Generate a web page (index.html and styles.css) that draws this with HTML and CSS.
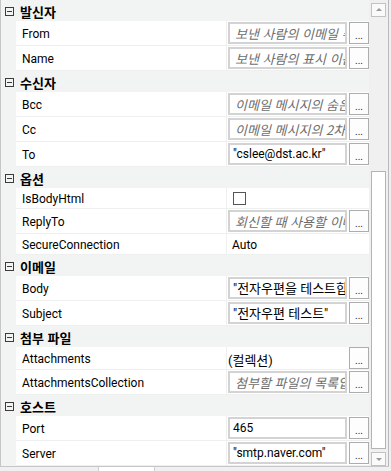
FILE: index.html
```html
<!DOCTYPE html>
<html lang="ko">
<head>
    <meta charset="UTF-8">
    <title>속성</title>
    <link rel="stylesheet" href="styles.css">
</head>
<body>

    <!-- 속성 그리드 -->
    <div class="panel">
        <div class="rows">
            <div class="cat"><span class="toggle"></span>발신자</div>
            <div class="prop">
                <div class="name">From</div>
                <div class="value"><span class="box ph">보낸 사람의 이메일 주소</span><span class="btn">...</span></div>
            </div>
            <div class="prop">
                <div class="name">Name</div>
                <div class="value"><span class="box ph">보낸 사람의 표시 이름</span><span class="btn">...</span></div>
            </div>

            <div class="cat"><span class="toggle"></span>수신자</div>
            <div class="prop">
                <div class="name">Bcc</div>
                <div class="value"><span class="box ph">이메일 메시지의 숨은 참조 수신자</span><span class="btn">...</span></div>
            </div>
            <div class="prop">
                <div class="name">Cc</div>
                <div class="value"><span class="box ph">이메일 메시지의 2차 수신자</span><span class="btn">...</span></div>
            </div>
            <div class="prop">
                <div class="name">To</div>
                <div class="value"><span class="box">"cslee@dst.ac.kr"</span><span class="btn">...</span></div>
            </div>

            <div class="cat"><span class="toggle"></span>옵션</div>
            <div class="prop short">
                <div class="name">IsBodyHtml</div>
                <div class="value"><span class="check"></span></div>
            </div>
            <div class="prop">
                <div class="name">ReplyTo</div>
                <div class="value"><span class="box ph">회신할 때 사용할 이메일 주소</span><span class="btn">...</span></div>
            </div>
            <div class="prop short">
                <div class="name">SecureConnection</div>
                <div class="value"><span class="plain">Auto</span></div>
            </div>

            <div class="cat"><span class="toggle"></span>이메일</div>
            <div class="prop">
                <div class="name">Body</div>
                <div class="value"><span class="box ko">"전자우편을 테스트합니다"</span><span class="btn">...</span></div>
            </div>
            <div class="prop">
                <div class="name">Subject</div>
                <div class="value"><span class="box ko">"전자우편 테스트"</span><span class="btn">...</span></div>
            </div>

            <div class="cat"><span class="toggle"></span>첨부 파일</div>
            <div class="prop mid">
                <div class="name">Attachments</div>
                <div class="value"><span class="plain coll">(컬렉션)</span><span class="btn">...</span></div>
            </div>
            <div class="prop">
                <div class="name">AttachmentsCollection</div>
                <div class="value"><span class="box ph">첨부할 파일의 목록입니다</span><span class="btn">...</span></div>
            </div>

            <div class="cat"><span class="toggle"></span>호스트</div>
            <div class="prop">
                <div class="name">Port</div>
                <div class="value"><span class="box">465</span><span class="btn">...</span></div>
            </div>
            <div class="prop">
                <div class="name">Server</div>
                <div class="value"><span class="box">"smtp.naver.com"</span><span class="btn">...</span></div>
            </div>
        </div>

        <!-- 세로 스크롤바 -->
        <div class="scrollbar">
            <span class="arrow up"></span>
            <span class="thumb"></span>
            <span class="arrow down"></span>
        </div>
    </div>

    <div class="footer"><span class="tab"></span></div>

</body>
</html>
```

FILE: styles.css
```css
body {
    margin: 0;
    font-family: Roboto, "Noto Sans CJK KR", sans-serif;
    font-size: 12px;
    color: #000;
    background: #f0f0f0;
}

.panel {
    display: flex;
    width: 387px;
    height: 466px;
    border-left: 1px solid #c6c6c6;
    border-right: 1px solid #b9b9b9;
    border-bottom: 1px solid #c6c6c6;
    background: #f0f0f0;
    overflow: hidden;
}
.rows {
    width: 368px;
    flex: none;
}

/* 카테고리 행 */
.cat {
    display: flex;
    align-items: center;
    height: 21px;
    box-sizing: border-box;
    padding-top: 2px;
    background: #f2f3f3;
    font-family: "Noto Sans CJK KR", sans-serif;
    font-weight: bold;
    font-size: 13px;
}
.toggle {
    position: relative;
    width: 9px;
    height: 9px;
    box-sizing: border-box;
    border: 1px solid #3c3c3c;
    margin: 0 6px 1px 4px;
}
.toggle::after {
    content: "";
    position: absolute;
    left: 1px;
    right: 1px;
    top: 3px;
    height: 1px;
    background: #3c3c3c;
}

/* 속성 행 */
.prop {
    display: flex;
    height: 25px;
    padding-left: 15px;
    background: #f2f3f3;
}
.prop.short { height: 21px; }
.prop.mid { height: 23px; }
.name, .value {
    display: flex;
    align-items: center;
    background: #fff;
    border-bottom: 1px solid #eef0f0;
}
.name {
    width: 211px;
    box-sizing: border-box;
    padding: 2px 0 0 6px;
    border-right: 1px solid #f0f0f0;
}
.value {
    flex: 1;
    gap: 2px;
    padding-left: 1px;
}
.box {
    width: 119px;
    height: 22px;
    box-sizing: border-box;
    border: 2px solid #d3d3d3;
    padding: 1px 3px 0;
    line-height: 17px;
    white-space: nowrap;
    overflow: hidden;
}
.box.ko {
    font-size: 13px;
}
.box.ph {
    font-family: "Noto Sans CJK KR", sans-serif;
    font-size: 13px;
    font-style: italic;
    color: #6d6d6d;
    padding-left: 5px;
}
.btn {
    display: flex;
    justify-content: center;
    align-items: flex-end;
    width: 20px;
    height: 22px;
    box-sizing: border-box;
    border: 1px solid #adadad;
    background: #fdfdfd;
    font-size: 10px;
    line-height: 14px;
    color: #1a1a50;
}
.plain {
    padding: 2px 0 0 4px;
    width: 119px;
    box-sizing: border-box;
}
.plain.coll { padding-left: 0; font-size: 13px; }
.check {
    width: 13px;
    height: 13px;
    box-sizing: border-box;
    border: 1px solid #555;
    background: #fff;
    margin-left: 5px;
}

/* 스크롤바 */
.scrollbar {
    display: flex;
    flex-direction: column;
    align-items: center;
    width: 19px;
    padding-top: 3px;
    background: #f0f0f0;
}
.arrow {
    position: relative;
    width: 15px;
    height: 14px;
    box-sizing: border-box;
    border: 1px solid #c2c2c2;
    background: #fafafa;
}
.arrow::after {
    content: "";
    position: absolute;
    left: 4px;
    border-left: 3px solid transparent;
    border-right: 3px solid transparent;
}
.arrow.up::after {
    top: 4px;
    border-bottom: 3px solid #9a9a9a;
}
.arrow.down::after {
    top: 5px;
    border-top: 3px solid #9a9a9a;
}
.thumb {
    width: 15px;
    height: 278px;
    box-sizing: border-box;
    border: 1px solid #b4b4b4;
    background: #fff;
    margin: 154px 0 3px;
}

/* 하단 */
.footer {
    height: 4px;
    padding-left: 98px;
}
.tab {
    display: block;
    width: 55px;
    height: 4px;
    background: #fff;
    border-left: 1px solid #d0d0d0;
    border-right: 1px solid #d0d0d0;
}
```
